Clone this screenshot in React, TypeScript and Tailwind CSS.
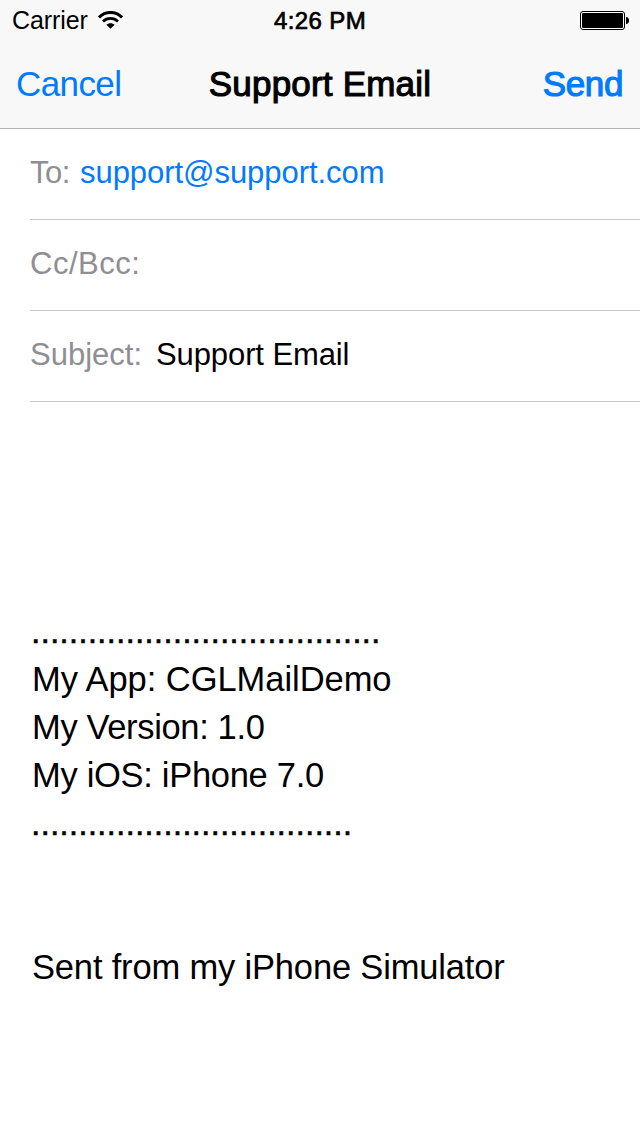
import type { ReactNode } from 'react';

function WifiIcon() {
  return (
    <svg className="mt-[11px] ml-[10px] h-[18px] w-[25px]" viewBox="0 0 25 18" fill="none">
      <path d="M1 6.4C7.4 -.2 17.6 -.2 24 6.4" stroke="#000" strokeWidth="3" />
      <path d="M5 10.5C9.2 6.4 15.8 6.4 20 10.5" stroke="#000" strokeWidth="2.8" />
      <path d="M12.5 17.8 8.3 13.7C10.6 11.6 14.4 11.6 16.7 13.7Z" fill="#000" />
    </svg>
  );
}

function BatteryIcon() {
  return (
    <svg className="h-[19px] w-[49px]" viewBox="0 0 49 19">
      <rect x=".5" y=".5" width="44" height="18" rx="2.5" fill="#fff" stroke="#000" />
      <rect x="2" y="2" width="41" height="15" rx="1" fill="#000" />
      <path d="M46 6C48 6 49 7.3 49 9.5S48 13 46 13Z" fill="#000" />
    </svg>
  );
}

function StatusBar() {
  return (
    <div className="grid h-10 grid-cols-[1fr_auto_1fr] text-[24px] leading-[40px]">
      <div className="flex pl-[12px]">
        <span className="w-[76px] text-[25px] tracking-[-0.1px]">Carrier</span>
        <WifiIcon />
      </div>
      <span className="pt-px tracking-[0.4px] [-webkit-text-stroke:0.7px_#000]">4:26 PM</span>
      <div className="flex justify-end pt-[11px] pr-[11px]">
        <BatteryIcon />
      </div>
    </div>
  );
}

function NavBar() {
  return (
    <div className="grid h-[88px] grid-cols-[1fr_auto_1fr] text-[35px] leading-[88px]">
      <button className="pl-[16px] text-left tracking-[-0.6px] text-[#007aff]">Cancel</button>
      <h1 className="tracking-[0.2px] [-webkit-text-stroke:1.1px_#000]">Support Email</h1>
      <button className="pr-[17px] text-right tracking-[-0.4px] text-[#007aff] [-webkit-text-stroke:1.1px_#007aff]">Send</button>
    </div>
  );
}

function Field({ children }: { children: ReactNode }) {
  return (
    <div className="ml-[30px] flex h-[91px] border-b border-[#c8c7cc] text-[31px] leading-[88px]">{children}</div>
  );
}

export default function App() {
  return (
    <div className="h-[1136px] w-[640px] overflow-hidden bg-white font-['Liberation_Sans',sans-serif] text-black">
      <header className="h-[129px] border-b border-[#b2b2b2] bg-[#f8f8f8]">
        <StatusBar />
        <NavBar />
      </header>
      <Field>
        <span className="w-[50px] tracking-[-0.5px] text-[#8e8e93]">To:</span>
        <span className="tracking-[-0.05px] text-[#007aff]">support@support.com</span>
      </Field>
      <Field>
        <span className="tracking-[0.5px] text-[#8e8e93]">Cc/Bcc:</span>
      </Field>
      <Field>
        <span className="w-[126px] text-[#8e8e93]">Subject:</span>
        <span className="tracking-[-0.1px]">Support Email</span>
      </Field>
      <div className="mt-[205px] pl-[32px] text-[34.5px] leading-[48px] whitespace-pre">
        <p className="-indent-px text-[34px] [-webkit-text-stroke:0.5px_#000]">.....................................</p>
        <p className="tracking-[-0.05px]">My App: CGLMailDemo</p>
        <p className="tracking-[-0.35px]">My Version: 1.0</p>
        <p className="tracking-[-0.3px]">My iOS: iPhone 7.0</p>
        <p className="-indent-px text-[34px] [-webkit-text-stroke:0.5px_#000]">..................................</p>
        <p className="mt-24 tracking-[-0.17px]">Sent from my iPhone Simulator</p>
      </div>
    </div>
  );
}
